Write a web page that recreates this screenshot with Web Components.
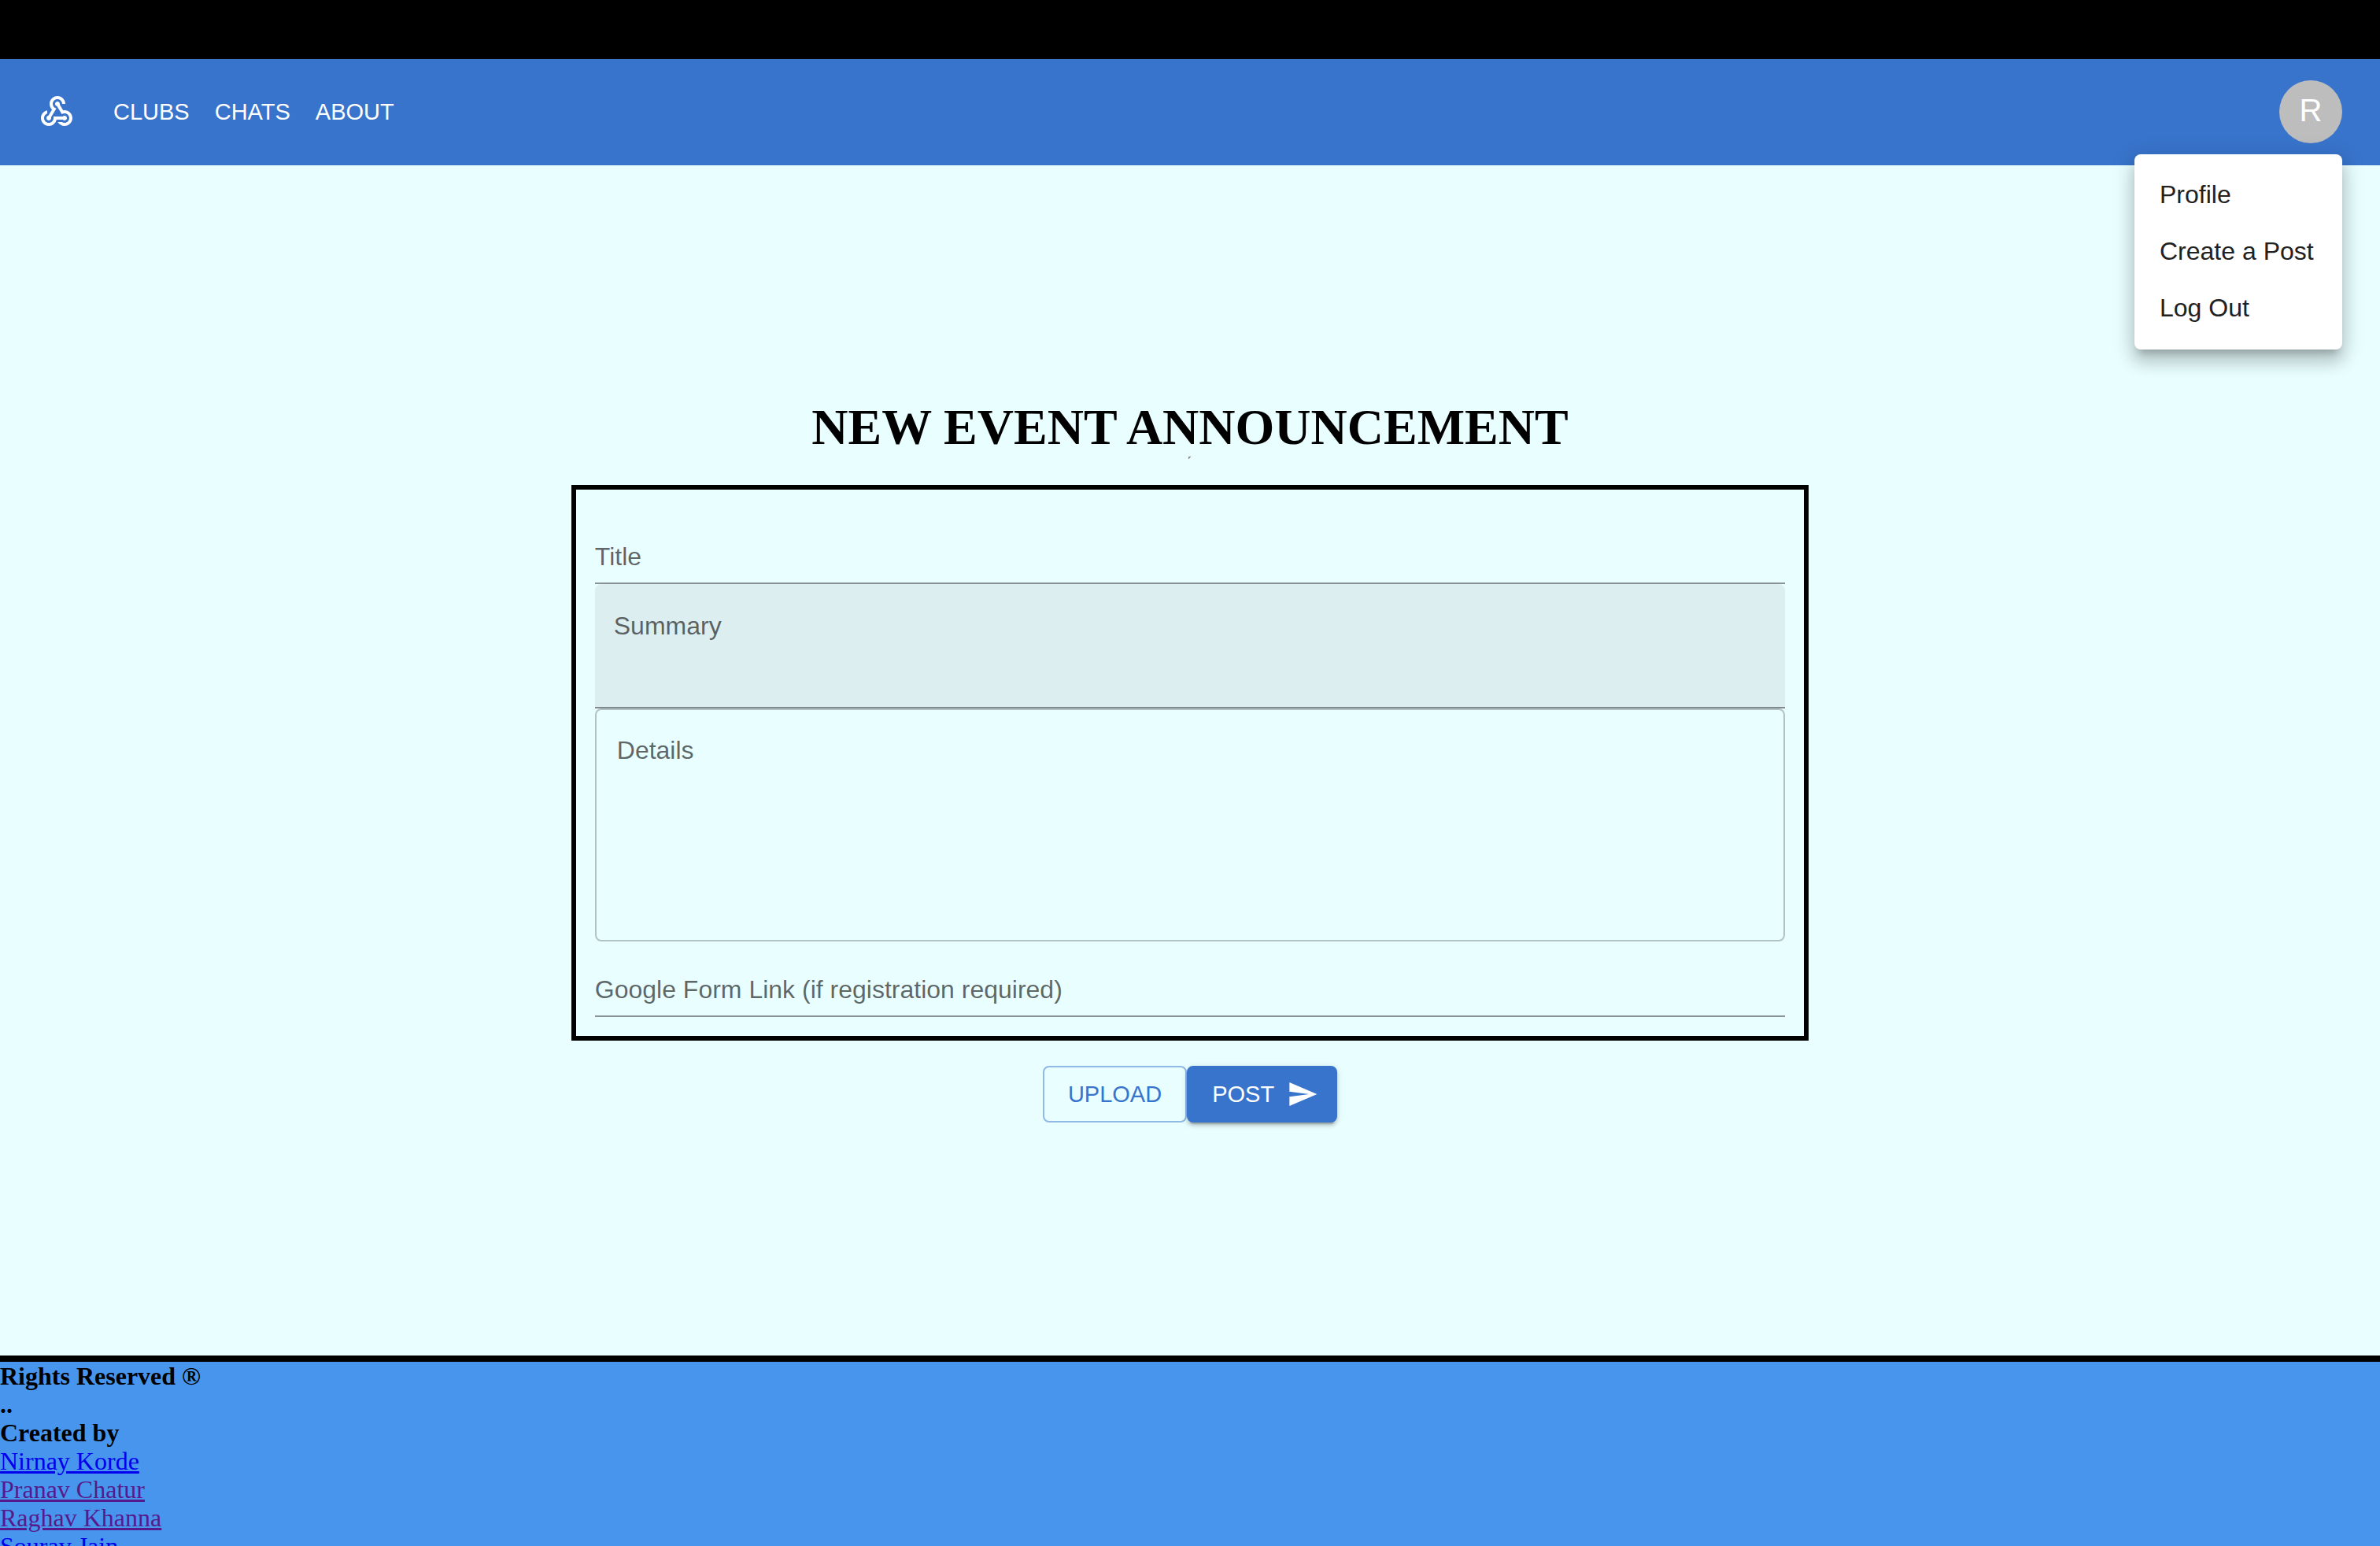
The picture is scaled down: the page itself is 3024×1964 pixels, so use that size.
<!DOCTYPE html>
<html lang="en">
<head>
<meta charset="utf-8">
<title>New Event Announcement</title>
<style>
html { scrollbar-width: none; }
body { margin: 0; background: #e9feff; color: #000; font-family: "Liberation Serif", "Times New Roman", serif; }
</style>
</head>
<body>
<event-page></event-page>
<script>
const define = (name, html, setup) => {
  const template = document.createElement('template');
  template.innerHTML = html;
  customElements.define(name, class extends HTMLElement {
    connectedCallback() {
      if (this.shadowRoot) return;
      this.attachShadow({ mode: 'open' }).append(template.content.cloneNode(true));
      if (setup) setup(this, this.shadowRoot);
    }
  });
};

define('nav-link', `
<style>
:host { display: block; }
a { display: block; color: #fff; text-decoration: none; font-size: 29px; line-height: 48px; }
</style>
<a href="#"><slot></slot></a>`);

define('menu-item', `
<style>
:host { display: block; }
button { display: block; width: 100%; border: 0; margin: 0; background: none; padding: 11px 32px 13px; text-align: left; white-space: nowrap; color: #212121; font: 32px/48px "Liberation Sans", Arial, sans-serif; }
</style>
<button type="button"><slot></slot></button>`);

define('account-menu', `
<style>
:host { display: block; position: relative; }
.avatar { display: grid; place-items: center; width: 80px; height: 80px; border: 0; padding: 0 0 4px; border-radius: 50%; background: #bdbdbd; color: #fff; font: 40px/40px "Liberation Sans", Arial, sans-serif; }
.menu { position: absolute; z-index: 2; top: 94px; right: 0; box-sizing: border-box; min-width: 264px; padding: 16px 0; background: #fff; border-radius: 8px; box-shadow: 0 10px 10px -6px rgba(0,0,0,.2), 0 16px 20px 2px rgba(0,0,0,.14), 0 6px 28px 4px rgba(0,0,0,.12); }
</style>
<button class="avatar" type="button" aria-label="Account">R</button>
<div class="menu">
  <menu-item>Profile</menu-item>
  <menu-item>Create a Post</menu-item>
  <menu-item>Log Out</menu-item>
</div>`);

define('app-bar', `
<style>
:host { display: block; border-top: 75px solid #000; background: #3874cb; font-family: "Liberation Sans", Arial, sans-serif; }
header { display: flex; align-items: center; justify-content: space-between; height: 134px; padding: 0 48px 1px; }
nav { display: flex; align-items: center; gap: 32px; }
.logo { display: block; width: 48px; height: 48px; margin-right: 16px; fill: #fff; }
</style>
<header>
  <nav>
    <svg class="logo" viewBox="0 0 24 24" aria-hidden="true"><path d="M10 15h5.880c.270-.310.670-.500 1.120-.500.830 0 1.500.670 1.500 1.500s-.670 1.500-1.500 1.500c-.440 0-.840-.190-1.120-.500h-3.980c-.460 2.280-2.480 4-4.900 4-2.760 0-5-2.240-5-5 0-2.420 1.720-4.440 4-4.900v2.070c-1.160.410-2 1.530-2 2.830 0 1.650 1.350 3 3 3s3-1.350 3-3v-1zm2.500-11c1.650 0 3 1.350 3 3h2c0-2.760-2.240-5-5-5s-5 2.240-5 5c0 1.430.600 2.710 1.550 3.620l-2.350 3.900c-.680.140-1.200.750-1.200 1.480 0 .830.670 1.500 1.500 1.500s1.500-.670 1.500-1.500c0-.160-.020-.310-.070-.450l3.380-5.630C10.490 9.610 9.500 8.420 9.500 7c0-1.650 1.350-3 3-3zm4.500 9c-.640 0-1.230.200-1.720.540l-3.050-5.070C11.530 8.350 11 7.740 11 7c0-.830.670-1.500 1.500-1.500S14 6.170 14 7c0 .150-.020.290-.060.430l2.190 3.650c.280-.050.570-.080.870-.080 2.760 0 5 2.240 5 5s-2.240 5-5 5c-1.850 0-3.470-1.010-4.330-2.500h2.670c.480.320 1.050.500 1.660.500 1.650 0 3-1.350 3-3s-1.350-3-3-3z"/></svg>
    <nav-link>CLUBS</nav-link>
    <nav-link>CHATS</nav-link>
    <nav-link>ABOUT</nav-link>
  </nav>
  <account-menu></account-menu>
</header>`);

define('text-field', `
<style>
:host { display: block; }
label { display: block; }
input, textarea { display: block; box-sizing: border-box; width: 100%; margin: 0; border: 0; border-radius: 0; background: none; color: #212121; resize: none; outline: 0; font: 32px/46px "Liberation Sans", Arial, sans-serif; }
::placeholder { color: rgba(0,0,0,.6); opacity: 1; }
input { height: 96px; padding: 36px 0 8px; border-bottom: 2px solid rgba(0,0,0,.42); }
.filled { height: 158px; padding: 30px 24px 0; background: #ddeef1; border-bottom: 2px solid rgba(0,0,0,.42); border-radius: 8px 8px 0 0; }
.outlined { height: 296px; padding: 28px 26px 0; border: 2px solid rgba(0,0,0,.23); border-radius: 8px; }
</style>
<label></label>`, (host, root) => {
  const variant = host.getAttribute('variant');
  const control = document.createElement(variant ? 'textarea' : 'input');
  if (variant) control.className = variant;
  control.placeholder = host.getAttribute('label');
  control.setAttribute('aria-label', host.getAttribute('label'));
  root.querySelector('label').append(control);
});

define('event-button', `
<style>
:host { display: block; }
button { display: flex; align-items: center; gap: 16px; box-sizing: border-box; height: 72px; margin: 0; padding: 0 30px; border: 2px solid rgba(56,116,203,.5); border-radius: 8px; background: none; color: #3874cb; font: 29px/48px "Liberation Sans", Arial, sans-serif; }
:host([primary]) button { border-color: #3874cb; padding: 0 22px 0 30px; background: #3874cb; color: #fff; box-shadow: 0 6px 2px -4px rgba(0,0,0,.2), 0 4px 4px rgba(0,0,0,.14), 0 2px 10px rgba(0,0,0,.12); }
</style>
<button type="button"><slot></slot><slot name="icon"></slot></button>`);

define('event-form', `
<style>
:host { display: flex; flex-direction: column; align-items: center; }
h1 { margin: 0; font-size: 64px; line-height: 74px; }
.mark { width: 4px; height: 4px; background: linear-gradient(135deg, #888 50%, #e9feff 50%); }
form { width: 52%; box-sizing: border-box; margin: 32px 0; padding: 24px; border: 6px solid #000; }
.actions { display: flex; }
svg { display: block; width: 40px; height: 40px; fill: #fff; }
</style>
<h1>NEW EVENT ANNOUNCEMENT</h1>
<div class="mark"></div>
<form>
  <text-field label="Title"></text-field>
  <text-field label="Summary" variant="filled"></text-field>
  <text-field label="Details" variant="outlined"></text-field>
  <text-field label="Google Form Link (if registration required)"></text-field>
</form>
<div class="actions">
  <event-button>UPLOAD</event-button>
  <event-button primary>POST<svg slot="icon" viewBox="0 0 24 24" aria-hidden="true"><path d="M2.010 21 23 12 2.010 3 2 10l15 2-15 2z"/></svg></event-button>
</div>`);

define('credit-link', `
<style>
:host { display: block; }
a { color: #0000ee; text-decoration: underline; }
:host([seen]) a { color: #551a8b; }
</style>
<a href="#"><slot></slot></a>`);

define('page-footer', `
<style>
:host { display: block; border-top: 8px solid #000; background: #4895ed; font-size: 32px; line-height: 36px; }
b { display: block; }
</style>
<b>Rights Reserved ®</b>
<b>..</b>
<b>Created by</b>
<credit-link>Nirnay Korde</credit-link>
<credit-link seen>Pranav Chatur</credit-link>
<credit-link seen>Raghav Khanna</credit-link>
<credit-link>Sourav Jain</credit-link>`);

define('event-page', `
<style>
:host { display: block; }
main { padding: 296px 0; }
</style>
<app-bar></app-bar>
<main><event-form></event-form></main>
<page-footer></page-footer>`);
</script>
</body>
</html>
